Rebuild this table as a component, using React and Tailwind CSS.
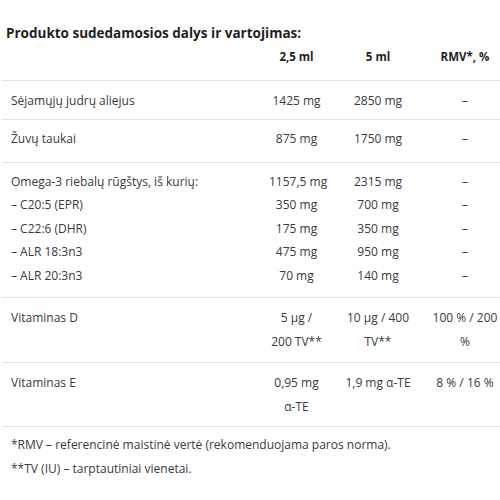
import React from "react";

const rows = [
  { name: ["Sėjamųjų judrų aliejus"], a: ["1425 mg"], b: ["2850 mg"], c: ["–"], pad: "pt-[8px] pb-[7px]" },
  { name: ["Žuvų taukai"], a: ["875 mg"], b: ["1750 mg"], c: ["–"], pad: "pt-[7px] pb-[11px]" },
  {
    name: ["Omega-3 riebalų rūgštys, iš kurių:", "– C20:5 (EPR)", "– C22:6 (DHR)", "– ALR 18:3n3", "– ALR 20:3n3"],
    a: ["1157,5 mg", "350 mg", "175 mg", "475 mg", "70 mg"],
    b: ["2315 mg", "700 mg", "350 mg", "950 mg", "140 mg"],
    c: ["–", "–", "–", "–", "–"],
    pad: "pt-[7px] pb-[10px]",
  },
  { name: ["Vitaminas D"], a: ["5 µg /", "200 TV**"], b: ["10 µg / 400", "TV**"], c: ["100 % / 200", "%"], pad: "pt-[8px] pb-[9px]" },
  { name: ["Vitaminas E"], a: ["0,95 mg", "α-TE"], b: ["1,9 mg α-TE"], c: ["8 % / 16 %"], pad: "pt-[8px] pb-[8px]" },
];

function Cell({ lines, className }) {
  return (
    <div className={className}>
      {lines.map((l, i) => (
        <div key={i} className="whitespace-nowrap">{l}</div>
      ))}
    </div>
  );
}

export default function App() {
  return (
    <div className="w-[500px] h-[500px] bg-white text-[12px] leading-[23.5px] text-[#383a40] font-['Open_Sans','Noto_Sans',sans-serif] overflow-hidden">
      <h2 className="pt-[22px] pl-[6px] text-[13.5px] leading-[22px] font-bold text-[#1f1f1f]">
        Produkto sudedamosios dalys ir vartojimas:
      </h2>
      <div className="ml-[2px] grid grid-cols-[260px_69px_94px_75px] border-b border-[#e3e3e3] pt-[1px] pb-[11px] text-[11.5px] font-bold text-[#1f1f1f]">
        <div></div>
        <div className="px-[7px] text-center">2,5 ml</div>
        <div className="px-[7px] text-center">5 ml</div>
        <div className="pl-[5px] text-center">RMV*, %</div>
      </div>
      {rows.map((r, i) => (
        <div key={i} className={`ml-[2px] grid grid-cols-[260px_69px_94px_75px] border-b border-[#e3e3e3] ${r.pad}`}>
          <Cell lines={r.name} className="pl-[9px]" />
          <Cell lines={r.a} className="px-[7px] text-center" />
          <Cell lines={r.b} className="px-[7px] text-center" />
          <Cell lines={r.c} className="pl-[5px] text-center" />
        </div>
      ))}
      <div className="pt-[6px] pl-[11px]">
        <p>*RMV – referencinė maistinė vertė (rekomenduojama paros norma).</p>
        <p>**TV (IU) – tarptautiniai vienetai.</p>
      </div>
    </div>
  );
}
